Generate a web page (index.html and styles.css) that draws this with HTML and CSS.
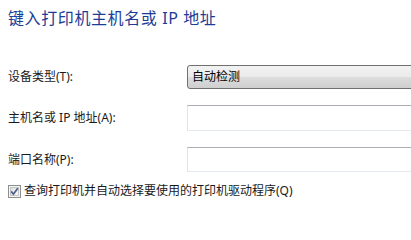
FILE: index.html
```html
<!DOCTYPE html>
<html lang="zh-CN">
<head>
<meta charset="utf-8">
<title>添加打印机</title>
<link rel="stylesheet" href="styles.css">
</head>
<body>
<div class="page">
  <h1 class="title">键入打印机主机名或 IP 地址</h1>
  <div class="form">
    <label class="label">设备类型(T):</label>
    <div class="combo"><span class="combo-text">自动检测</span></div>
    <label class="label">主机名或 IP 地址(A):</label>
    <div class="textbox"></div>
    <label class="label">端口名称(P):</label>
    <div class="textbox"></div>
  </div>
  <div class="check-row">
    <span class="checkbox">
      <svg width="13" height="13" viewBox="0 0 13 13">
        <defs>
          <linearGradient id="cbg" x1="0" y1="0" x2="1" y2="1">
            <stop offset="0" stop-color="#dcdcdc"/>
            <stop offset="1" stop-color="#fbfbfb"/>
          </linearGradient>
        </defs>
        <rect x="0.5" y="0.5" width="12" height="12" fill="#f4f4f4" stroke="#8e8f8f"/>
        <rect x="2.5" y="2.5" width="8" height="8" fill="url(#cbg)" stroke="#c6c6c6"/>
        <path d="M3.2 6.4 L5.4 9.2 L9.8 3.2" fill="none" stroke="#4a5e8a" stroke-width="1.7"/>
      </svg>
    </span>
    <span class="check-text">查询打印机并自动选择要使用的打印机驱动程序(Q)</span>
  </div>
</div>
</body>
</html>
```

FILE: styles.css
```css
html, body {
  margin: 0;
  padding: 0;
  background: #ffffff;
  overflow: hidden;
}

.page {
  width: 411px;
  height: 208px;
  padding: 8px 0 0 8px;
  box-sizing: border-box;
  display: flex;
  flex-direction: column;
  font-family: "Noto Sans", "Noto Sans CJK SC", sans-serif;
  font-size: 12px;
  color: #1a1a1a;
  overflow: hidden;
}

.title {
  margin: 0;
  font-size: 16px;
  font-weight: normal;
  line-height: 20px;
  letter-spacing: 0.6px;
  color: #1d3c96;
  white-space: nowrap;
}

.form {
  margin-top: 37px;
  display: grid;
  grid-template-columns: 179px 240px;
  grid-template-rows: 24px 26px 25px;
  row-gap: 16px;
  align-items: center;
}

.label {
  line-height: 16px;
  white-space: nowrap;
}

.combo {
  height: 24px;
  box-sizing: border-box;
  border: 1px solid #707070;
  border-radius: 3px;
  background: linear-gradient(to bottom, #f2f2f2 0%, #ebebeb 50%, #dddddd 51%, #cfcfcf 100%);
  display: flex;
  align-items: center;
  padding-left: 4px;
}

.combo-text {
  line-height: 16px;
  color: #000;
}

.textbox {
  height: 26px;
  box-sizing: border-box;
  border: 1px solid #e3e9ef;
  border-top-color: #abadb3;
  border-left-color: #e2e3ea;
  background: #fff;
}

.form .textbox:last-child {
  height: 25px;
}

.check-row {
  margin-top: 11px;
  display: flex;
  align-items: center;
  gap: 3px;
}

.checkbox {
  display: flex;
  width: 13px;
  height: 13px;
}

.check-text {
  line-height: 16px;
  white-space: nowrap;
}
```
